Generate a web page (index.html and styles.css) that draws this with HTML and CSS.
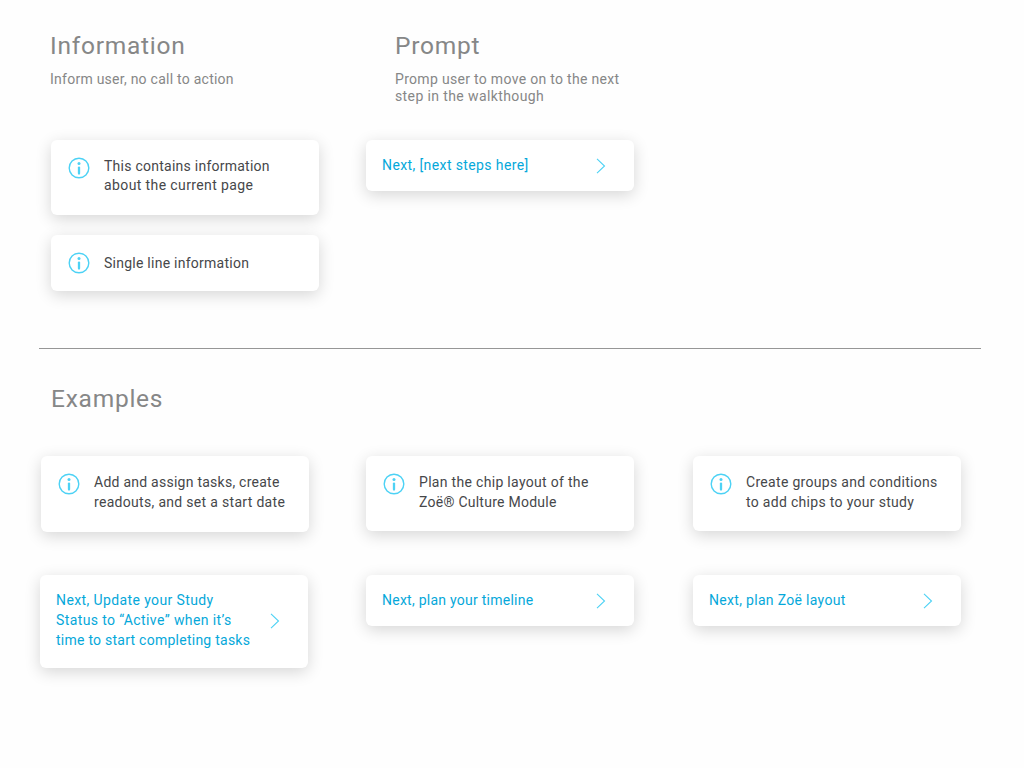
FILE: index.html
```html
<!DOCTYPE html>
<html lang="en">
<head>
<meta charset="utf-8">
<title>Walkthrough messages</title>
<link rel="stylesheet" href="styles.css">
</head>
<body>
<svg class="symbols" aria-hidden="true">
  <symbol id="info" viewBox="0 0 22 22">
    <circle cx="11" cy="11" r="9.8" fill="none" stroke="currentColor" stroke-width="1.4"/>
    <circle cx="11" cy="6.5" r="1.5" fill="currentColor"/>
    <path d="M11 10.6v6" fill="none" stroke="currentColor" stroke-width="2.3" stroke-linecap="round"/>
  </symbol>
  <symbol id="chevron" viewBox="0 0 10 16">
    <path d="M1 .8l7.5 7.2L1 15.2" fill="none" stroke="currentColor" stroke-width="1.1"/>
  </symbol>
</svg>
<main class="page">
  <section class="types">
    <div class="type">
      <header class="intro">
        <h2 class="title">Information</h2>
        <p class="summary">Inform user, no call to action</p>
      </header>
      <div class="stack">
        <article class="card info compact"><svg class="info-icon"><use href="#info"/></svg><p>This contains information<br><span class="wide">about the current page</span></p></article>
        <article class="card info single"><svg class="info-icon"><use href="#info"/></svg><p>Single line information</p></article>
      </div>
    </div>
    <div class="type">
      <header class="intro prompt-intro">
        <h2 class="title">Prompt</h2>
        <p class="summary"><span class="loose">Promp user to move on to the next</span><br><span class="wide">step in the walkthough</span></p>
      </header>
      <article class="card prompt"><p class="wide">Next, [next steps here]</p><svg class="chevron"><use href="#chevron"/></svg></article>
    </div>
  </section>
  <hr class="divider">
  <section class="examples">
    <h2 class="title">Examples</h2>
    <div class="columns">
      <div class="column first">
        <article class="card info tall"><svg class="info-icon"><use href="#info"/></svg><p>Add and assign tasks, create<br><span class="loose">readouts, and set a start date</span></p></article>
        <article class="card prompt long"><p><span class="wide">Next, Update your Study<br>Status to “Active” when it’s</span><br>time to start completing tasks</p><svg class="chevron"><use href="#chevron"/></svg></article>
      </div>
      <div class="column">
        <article class="card info"><svg class="info-icon"><use href="#info"/></svg><p><span class="loose">Plan the chip layout of the</span><br>Zoë® Culture Module</p></article>
        <article class="card prompt"><p>Next, plan your timeline</p><svg class="chevron"><use href="#chevron"/></svg></article>
      </div>
      <div class="column">
        <article class="card info"><svg class="info-icon"><use href="#info"/></svg><p class="loose">Create groups and conditions<br>to add chips to your study</p></article>
        <article class="card prompt"><p class="loose">Next, plan Zoë layout</p><svg class="chevron"><use href="#chevron"/></svg></article>
      </div>
    </div>
  </section>
</main>
</body>
</html>
```
FILE: styles.css
```css
* { box-sizing: border-box; }
body { margin: 0; background: #fefefe; font-family: Roboto, "Liberation Sans", sans-serif; font-size: 14px; line-height: 20px; letter-spacing: .25px; color: #46474a; }
h2, p { margin: 0; white-space: nowrap; }
.symbols { display: none; }
.loose { letter-spacing: .31px; }
.wide { letter-spacing: .39px; }
.page { width: 1024px; height: 768px; padding: 31px 43px 0 39px; }
.types { display: flex; gap: 47px; height: 317px; padding-left: 12px; }
.type { width: 268px; }
.intro { height: 109px; margin-left: -1px; color: #868787; }
.prompt-intro { margin-left: 29px; }
.title { font-size: 24.5px; line-height: 30px; font-weight: 400; letter-spacing: .75px; color: #868787; }
.summary { margin-top: 10px; line-height: 17px; }
.stack { display: flex; flex-direction: column; gap: 20px; }
.card { width: 268px; display: flex; background: #fff; border-radius: 6px; box-shadow: 0 4px 16px rgba(0, 0, 0, .16); }
.info { height: 75px; padding: 16px 0 0 17px; gap: 14px; }
.info-icon { width: 22px; height: 22px; flex: none; margin-top: 1px; color: #4dd2f5; }
.compact { line-height: 19px; padding-top: 17px; }
.compact .info-icon { margin-top: 0; }
.single { height: 56px; padding-top: 18px; }
.single .info-icon { margin-top: -1px; }
.tall { height: 76px; }
.prompt { height: 51px; padding: 15px 28px 0 16px; justify-content: space-between; color: #05a8da; }
.chevron { width: 10px; height: 16px; flex: none; margin-top: 3px; color: #4dd2f5; }
.long { height: 93px; margin-left: -1px; }
.long .chevron { margin-top: 23px; }
.divider { width: 942px; height: 1px; margin: 0; border: 0; background: #969696; }
.examples { padding-top: 35px; }
.examples .title { margin-left: 12px; }
.columns { display: grid; grid-template-columns: 325px 327px 268px; margin: 42px 0 0 2px; }
.column { display: flex; flex-direction: column; gap: 44px; }
.first { gap: 43px; }
```
